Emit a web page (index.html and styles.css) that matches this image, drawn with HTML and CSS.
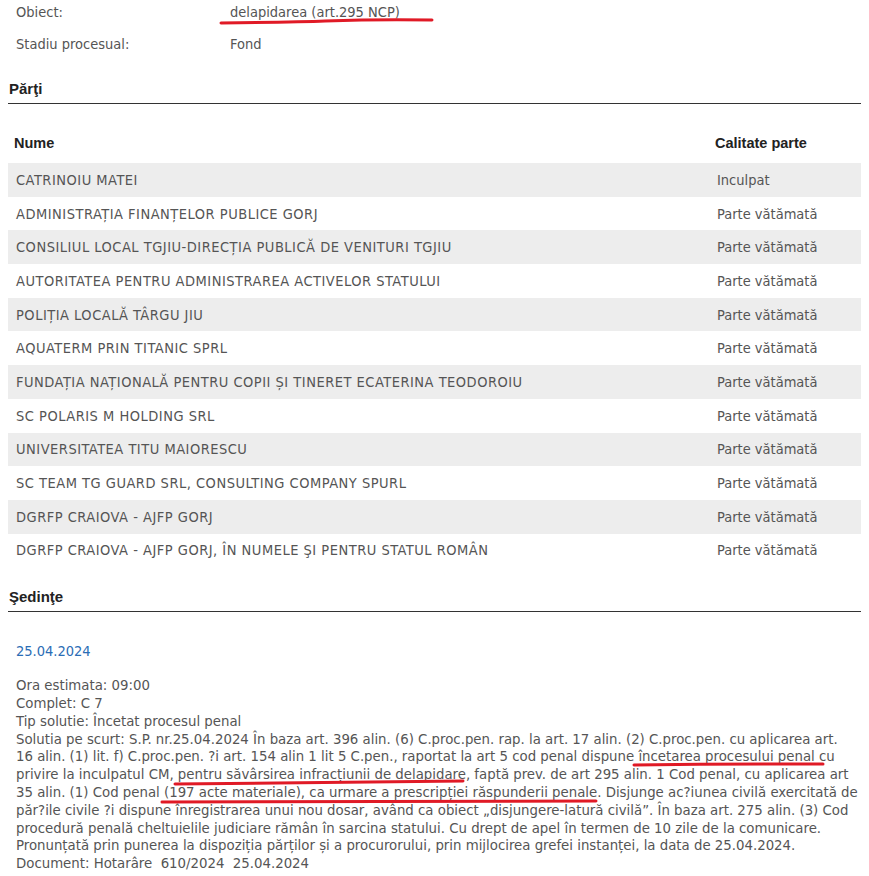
FILE: index.html
```html
<!DOCTYPE html>
<html lang="ro">
<head>
  <meta charset="UTF-8">
  <title>Dosar - detalii</title>
  <link rel="stylesheet" href="styles.css">
</head>
<body>
  <div class="page">
    <div class="info">
      <div class="label">Obiect:</div>
      <div>delapidarea (art.295 NCP)</div>
      <div class="label">Stadiu procesual:</div>
      <div>Fond</div>
    </div>

    <h3 class="section">Părţi</h3>
    <table class="parti">
      <thead>
        <tr>
          <th class="col-nume">Nume</th>
          <th>Calitate parte</th>
        </tr>
      </thead>
      <tbody>
        <tr><td>CATRINOIU MATEI</td><td>Inculpat</td></tr>
        <tr><td>ADMINISTRAȚIA FINANȚELOR PUBLICE GORJ</td><td>Parte vătămată</td></tr>
        <tr><td>CONSILIUL LOCAL TGJIU-DIRECȚIA PUBLICĂ DE VENITURI TGJIU</td><td>Parte vătămată</td></tr>
        <tr><td>AUTORITATEA PENTRU ADMINISTRAREA ACTIVELOR STATULUI</td><td>Parte vătămată</td></tr>
        <tr><td>POLIȚIA LOCALĂ TÂRGU JIU</td><td>Parte vătămată</td></tr>
        <tr><td>AQUATERM PRIN TITANIC SPRL</td><td>Parte vătămată</td></tr>
        <tr><td>FUNDAȚIA NAȚIONALĂ PENTRU COPII ȘI TINERET ECATERINA TEODOROIU</td><td>Parte vătămată</td></tr>
        <tr><td>SC POLARIS M HOLDING SRL</td><td>Parte vătămată</td></tr>
        <tr><td>UNIVERSITATEA TITU MAIORESCU</td><td>Parte vătămată</td></tr>
        <tr><td>SC TEAM TG GUARD SRL, CONSULTING COMPANY SPURL</td><td>Parte vătămată</td></tr>
        <tr><td>DGRFP CRAIOVA - AJFP GORJ</td><td>Parte vătămată</td></tr>
        <tr><td>DGRFP CRAIOVA - AJFP GORJ, ÎN NUMELE ŞI PENTRU STATUL ROMÂN</td><td>Parte vătămată</td></tr>
      </tbody>
    </table>

    <h3 class="section sedinte">Şedinţe</h3>
    <div class="sedinta">
      <div class="data">25.04.2024</div>
      <div class="detalii">
        Ora estimata: 09:00<br>
        Complet: C 7<br>
        Tip solutie: Încetat procesul penal<br>
        Solutia pe scurt: S.P. nr.25.04.2024 În baza art. 396 alin. (6) C.proc.pen. rap. la art. 17 alin. (2) C.proc.pen. cu aplicarea art.<br>
        16 alin. (1) lit. f) C.proc.pen. ?i art. 154 alin 1 lit 5 C.pen., raportat la art 5 cod penal dispune încetarea procesului penal cu<br>
        privire la inculpatul CM, pentru săvârsirea infracțiunii de delapidare, faptă prev. de art 295 alin. 1 Cod penal, cu aplicarea art<br>
        35 alin. (1) Cod penal (197 acte materiale), ca urmare a prescripției răspunderii penale. Disjunge ac?iunea civilă exercitată de<br>
        păr?ile civile ?i dispune înregistrarea unui nou dosar, având ca obiect „disjungere-latură civilă”. În baza art. 275 alin. (3) Cod<br>
        procedură penală cheltuielile judiciare rămân în sarcina statului. Cu drept de apel în termen de 10 zile de la comunicare.<br>
        Pronunțată prin punerea la dispoziția părților și a procurorului, prin mijlocirea grefei instanței, la data de 25.04.2024.<br>
        Document: Hotarâre&nbsp; 610/2024&nbsp; 25.04.2024
      </div>
    </div>
  </div>

  <svg class="marks" width="869" height="876" viewBox="0 0 869 876">
    <path d="M221 23 Q 300 22 325 21 Q 380 19 432 20" />
    <path d="M634 765 Q 730 764 823 764" />
    <path d="M175 784 Q 320 783 463 781" />
    <path d="M162 802 Q 380 801 596 801" />
  </svg>
</body>
</html>
```

FILE: styles.css
```css
body {
  margin: 0;
  font-family: "DejaVu Sans Condensed", "DejaVu Sans", sans-serif;
  font-size: 14.5px;
  color: #555;
  background: #fff;
}
.page {
  padding: 0 8px;
}
.info {
  display: grid;
  grid-template-columns: 214px 1fr;
  grid-auto-rows: 24px;
  row-gap: 8px;
  padding-left: 8px;
  line-height: 24px;
}
.section {
  margin: 24px 0 0;
  padding: 0 0 5px 1px;
  font-family: "Liberation Sans", Arial, sans-serif;
  font-size: 15px;
  line-height: 18px;
  color: #222;
  border-bottom: 1px solid #333;
}
.parti {
  width: 100%;
  margin-top: 22px;
  border-collapse: collapse;
}
.parti th {
  height: 37px;
  padding: 9px 6px 0;
  text-align: left;
  vertical-align: top;
  font-family: "Liberation Sans", Arial, sans-serif;
  font-size: 14.5px;
  color: #222;
  box-sizing: border-box;
}
.parti .col-nume {
  width: 701px;
}
.parti td {
  height: 33.7px;
  padding: 0 8px;
  vertical-align: middle;
}
.parti td:first-child {
  letter-spacing: 0.5px;
}
.parti tbody tr:nth-child(odd) {
  background: #ededed;
}
.sedinte {
  margin-top: 21px;
}
.sedinta {
  padding: 30px 8px 0;
}
.data {
  color: #2a6db5;
  line-height: 18px;
  margin-bottom: 16px;
}
.detalii {
  font-size: 14.8px;
  line-height: 17.8px;
  white-space: nowrap;
}
.marks {
  position: absolute;
  top: 0;
  left: 0;
  pointer-events: none;
}
.marks path {
  fill: none;
  stroke: #e01a26;
  stroke-width: 3;
  stroke-linecap: round;
}
```
